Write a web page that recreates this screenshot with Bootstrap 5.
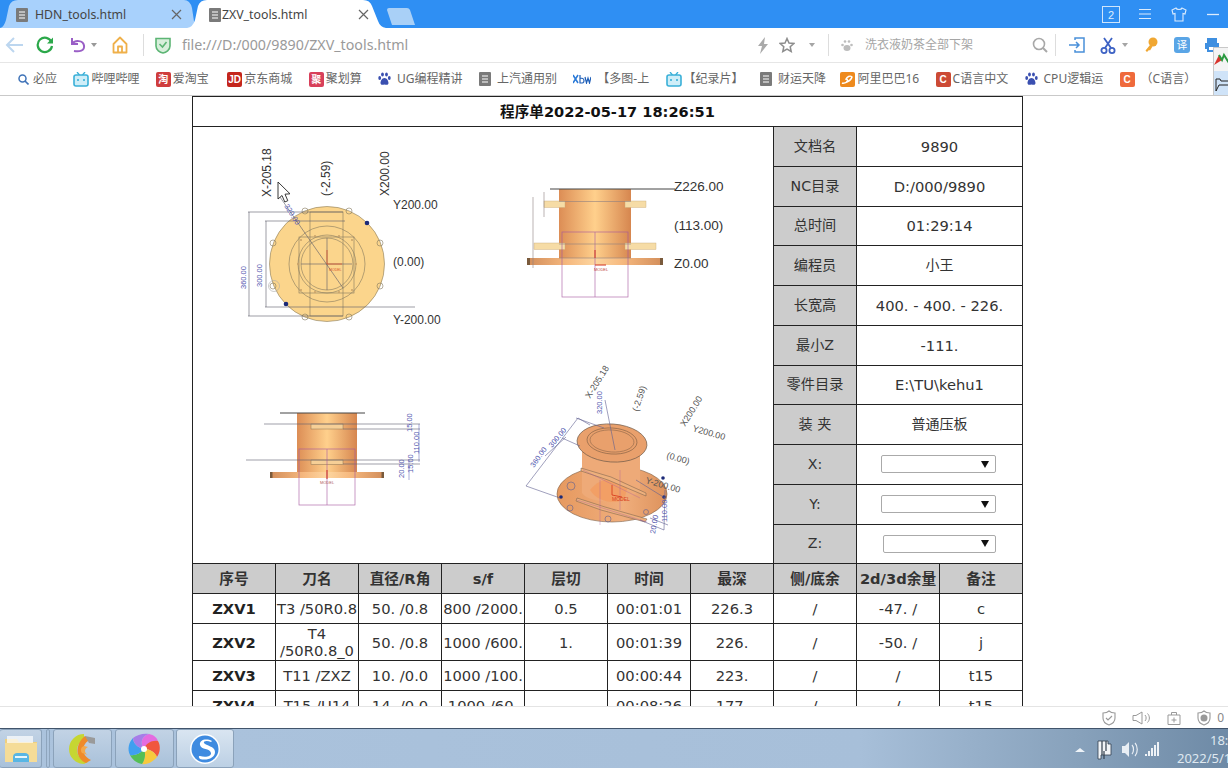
<!DOCTYPE html>
<html lang="zh">
<head>
<meta charset="utf-8">
<title>ZXV_tools.html</title>
<link href="https://cdn.jsdelivr.net/npm/bootstrap@5.3.0/dist/css/bootstrap.min.css" rel="stylesheet">
<style>
html,body{height:100%;overflow:hidden;background:#fff}
body{font-family:"Noto Sans","Noto Sans CJK SC",sans-serif;color:#333}
.shell{height:768px;width:1228px;position:relative}
.tabbar{height:28px;background:#2f8ff3;flex:none}
.tabshape{height:28px;flex:none;position:relative;font-size:12.3px;color:#444}
.tab-a{width:195px;background:#a8d1fc;clip-path:path("M0 28 Q4 27 6 20 L9 6 Q11 0 18 0 L184 0 Q190 0 192 8 L195 28 Z")}
.tab-b{width:199px;margin-left:-8px;background:#fff;clip-path:path("M0 28 Q6 27 8 20 L11 6 Q13 0 20 0 L176 0 Q183 0 185 6 L191 21 Q193 27 199 28 Z")}
.tabdoc{position:absolute;top:8px}
.tab-a .tabdoc{left:16px}.tab-b .tabdoc{left:22px}
.tablabel{position:absolute;top:5px;line-height:20px}
.tab-a .tablabel{left:35px}.tab-b .tablabel{left:35px}
.tabx{position:absolute;top:9px;width:11px;height:11px}
.tab-a .tabx{left:171px}.tab-b .tabx{left:171px}
.newtab{width:29px;height:17px;margin-top:8px;flex:none;background:#a9d0f7;clip-path:path("M1 2 Q1 0 3 0 L21 0 Q23 0 24 2 L29 17 L6 17 Z")}
.winbtns{margin-left:687px}
.adr{height:34px;background:#fff;padding-left:5px;flex:none}
.vsep{width:1px;height:22px;background:#ddd;flex:none}
.url{width:575px;margin-left:11px;color:#9a9a9a;font-size:14.25px;flex:none;white-space:nowrap}
.hint{width:167px;margin-left:12px;color:#a5a5a5;font-size:12px;flex:none;white-space:nowrap}
.m4{margin-left:4px}.m6{margin-left:6px}.m7{margin-left:7px}.m10{margin-left:10px}.m11{margin-left:11px}.m12{margin-left:12px}.m13{margin-left:13px}.m14{margin-left:14px}.m15{margin-left:15px}.m16{margin-left:16px}.m18{margin-left:18px}.m19{margin-left:19px}.m20{margin-left:20px}
.adr svg{flex:none}
.bmarks{height:34px;background:#fff;border-top:1px solid #e6e6e6;border-bottom:1px solid #c9c9c9;padding-left:18px;gap:16.4px;font-size:12px;color:#666;flex:none;white-space:nowrap}
.bmk{gap:2px}
.bmk-lead{gap:4px}
.bmk-tight{margin-left:-2px}
.bmk-push{margin-left:2px}
.tile{width:15px;height:15px;border-radius:2px;color:#fff;font-size:10px;line-height:15px;text-align:center;font-weight:700;flex:none;font-family:"Liberation Sans","Noto Sans CJK SC",sans-serif}
.tile-red{background:#cf3d3d}.tile-jd{background:#c4261d}.tile-pink{background:#d8405a}.tile-c{background:#cc4a35}.tile-o{background:#ef6a3c}.tile-ali{background:#ee8a1d}
.floatbox{position:absolute;left:1213px;top:47px;width:15px;height:49px;background:#f4f4f4;border:1px solid #c8c8c8;border-right:0;overflow:hidden}
.floatlow{position:absolute;left:0;top:23px;width:15px;height:26px;background:#cfe3f8}
.viewport{height:610px;overflow:hidden;background:#fff;flex:none;padding-right:13px}
.sheet.table{width:831px;table-layout:fixed;margin:0 auto;font-family:"DejaVu Sans","Noto Sans CJK SC",sans-serif;font-size:14.7px;--bs-table-color:#333;--bs-table-border-color:#222;border-color:#222}
.sheet.table>:not(caption)>*>*{padding:0;vertical-align:middle;text-align:center;line-height:17px;white-space:nowrap}
.sheet.table>tbody>tr>.drawcell{padding:0;vertical-align:top;text-align:left}
.sheet.table .keycell{--bs-table-bg:#ccc;font-size:14.2px}
.sheet.table .headcell{--bs-table-bg:#ccc;font-weight:700}
.sheet.table .hancell{font-size:14px}
.rowtitle{height:30px}.rowside{height:39.75px}.rowhead{height:30px}.rowdata{height:30px}.rowtall{height:37px}
.sheet.table .titlecell{font-weight:700;color:#111;font-size:14.6px}
.strong-id{font-weight:700;color:#222}
.drawcell svg{display:block}
.drawcell text{font-family:"Liberation Sans",sans-serif}
.lab{font-size:12px;fill:#333}
.labbig{font-size:13.5px;fill:#333}
.dim{font-size:7.5px;fill:#5358b0}
.iso{font-size:9px;fill:#555}
.pick.form-select{width:115px;height:18px;min-height:0;padding:0;margin:0 0 0 24px;border:1px solid #aaa;border-radius:2px;background-image:url("data:image/svg+xml,%3Csvg xmlns='http://www.w3.org/2000/svg' width='9' height='8'%3E%3Cpath d='M0 0h9L4.500 8z' fill='%23111'/%3E%3C/svg%3E");background-size:8px 7px;background-position:right 6px center;font-size:12px}
.pick-z.form-select{width:113px;margin-left:26px}
.statusbar{height:22px;border-top:1px solid #e4e4e4;background:#fff;flex:none;padding-right:4px;font-size:12px;color:#888}
.taskbar{height:40px;border-top:1px solid #41546b;background:linear-gradient(90deg,#abc3dd 0,#a7bfd9 70%,#87a1bb 88%,#6e8aa6 100%);flex:none;overflow:hidden;position:relative}
.taskbtn{height:39px;width:59px;border:1px solid #8ba2ba;border-radius:3px;background:linear-gradient(180deg,#c2d3e5,#a9c1da);flex:none}
.taskbtn-on{background:linear-gradient(180deg,#d9e5f1,#bcd0e4);width:58px}
.taskbtn-first{width:42px;border-left:0}
.taskgap{margin-left:2.5px}
.grip{width:4px;height:39px;margin:0 3px 0 4px;border:1px solid #8ea5bd;border-radius:2px;flex:none}
.tray{position:absolute;left:1075px;top:0;width:153px;height:39px}
.clock{position:absolute;color:#dfe8f0;font-size:13px;white-space:nowrap;line-height:16px}
.clock-a{left:135px;top:3px}.clock-b{left:102px;top:21px}
</style>
</head>
<body>
<div class="shell d-flex flex-column">

<div class="tabbar d-flex">
  <div class="tabshape tab-a">
    <svg class="tabdoc" width="12" height="14" viewBox="0 0 12 14"><rect width="12" height="14" rx="1" fill="#7a7a7a"/><path d="M3 4h6M3 7h6M3 10h6" stroke="#fff" stroke-width="1.200"/></svg>
    <span class="tablabel">HDN_tools.html</span>
    <svg class="tabx" viewBox="0 0 11 11"><path d="M1 1l9 9M10 1l-9 9" stroke="#666" stroke-width="1.200"/></svg>
  </div>
  <div class="tabshape tab-b">
    <svg class="tabdoc" width="12" height="14" viewBox="0 0 12 14"><rect width="12" height="14" rx="1" fill="#7a7a7a"/><path d="M3 4h6M3 7h6M3 10h6" stroke="#fff" stroke-width="1.200"/></svg>
    <span class="tablabel">ZXV_tools.html</span>
    <svg class="tabx" viewBox="0 0 11 11"><path d="M1 1l9 9M10 1l-9 9" stroke="#666" stroke-width="1.200"/></svg>
  </div>
  <div class="newtab"></div>
  <div class="winbtns d-flex align-items-center">
    <svg width="18" height="17" viewBox="0 0 18 17"><rect x=".5" y=".5" width="17" height="16" fill="none" stroke="#cfe5fb"/><text x="9" y="13" font-size="11" text-anchor="middle" fill="#dcecfd" font-family="Liberation Sans">2</text></svg>
    <svg class="m18" width="14" height="12" viewBox="0 0 14 12"><path d="M1 1.500h12M1 6h12M1 10.500h12" stroke="#dcecfd" stroke-width="1.200"/></svg>
    <svg class="m19" width="16" height="15" viewBox="0 0 16 15"><path d="M5 1L1 3l1 4 2-.5V14h8V6.500l2 .5 1-4-4-2c-.5 2-5.500 2-6 0z" fill="none" stroke="#dcecfd" stroke-width="1.100"/></svg>
    <svg class="m20" width="12" height="3" viewBox="0 0 12 3"><path d="M0 1.500h12" stroke="#dcecfd" stroke-width="1.300"/></svg>
  </div>
</div>

<div class="adr d-flex align-items-center">
  <svg width="20" height="18" viewBox="0 0 20 18"><path d="M9 2L2 9l7 7M2 9h16" fill="none" stroke="#bcd6ef" stroke-width="2"/></svg>
  <svg class="m11" width="18" height="18" viewBox="0 0 18 18"><path d="M15.500 6A7.200 7.200 0 1 0 16 10" fill="none" stroke="#2ba84a" stroke-width="2.200"/><path d="M17 1.500v6h-6z" fill="#2ba84a"/></svg>
  <svg class="m15" width="18" height="18" viewBox="0 0 18 18"><path d="M3 2v6h6" fill="none" stroke="#9a5fc6" stroke-width="2"/><path d="M3.500 7.500C6 4 14 4 15 9.500S10 16 5 15" fill="none" stroke="#9a5fc6" stroke-width="2"/></svg>
  <svg class="m4" width="6" height="4" viewBox="0 0 6 4"><path d="M0 0h6L3 4z" fill="#999"/></svg>
  <svg class="m14" width="18" height="18" viewBox="0 0 18 18"><path d="M9 1.500L2.500 8v8.500h13V8zM7 16.500v-6h4v6" fill="none" stroke="#efb04a" stroke-width="1.800" stroke-linejoin="round"/></svg>
  <div class="vsep m14"></div>
  <svg class="m11" width="16" height="18" viewBox="0 0 16 18"><path d="M1 2.500h14V10c0 4-4 6.500-7 7-3-.5-7-3-7-7z" fill="#d8efdc" stroke="#5cb574" stroke-width="1.600"/><path d="M4.500 8l3 3 4-5" fill="none" stroke="#5cb574" stroke-width="1.600"/></svg>
  <div class="url">file:///D:/000/9890/ZXV_tools.html</div>
  <svg width="12" height="17" viewBox="0 0 12 17"><path d="M8 0L1 9h4l-2 8 8-10H7z" fill="#a9a9a9"/></svg>
  <svg class="m10" width="16" height="16" viewBox="0 0 16 16"><path d="M8 1.500l2 4.500 4.800.5-3.600 3.200 1 4.800L8 12l-4.200 2.500 1-4.800L1.200 6.500 6 6z" fill="none" stroke="#8d8d8d" stroke-width="1.500"/></svg>
  <svg class="m14" width="6" height="4" viewBox="0 0 6 4"><path d="M0 0h6L3 4z" fill="#a5a5a5"/></svg>
  <div class="vsep m13"></div>
  <svg class="m12" width="12" height="13" viewBox="0 0 12 13"><g fill="#bdbdbd"><ellipse cx="6" cy="9" rx="3.500" ry="3"/><circle cx="1.500" cy="6" r="1.300"/><circle cx="10.500" cy="6" r="1.300"/><circle cx="4" cy="2.500" r="1.300"/><circle cx="8" cy="2.500" r="1.300"/></g></svg>
  <div class="hint">洗衣液奶茶全部下架</div>
  <svg width="16" height="16" viewBox="0 0 16 16"><circle cx="7" cy="7" r="5.500" fill="none" stroke="#a8a8a8" stroke-width="1.600"/><path d="M11 11l4 4" stroke="#a8a8a8" stroke-width="2"/></svg>
  <div class="vsep m7"></div>
  <svg class="m13" width="16" height="16" viewBox="0 0 16 16"><path d="M6 3V1h9v14H6v-2" fill="none" stroke="#4a90d9" stroke-width="1.500"/><path d="M0 8h9M7 5l3 3-3 3" fill="none" stroke="#4a90d9" stroke-width="1.500"/></svg>
  <svg class="m15" width="16" height="17" viewBox="0 0 16 17"><path d="M4 1l7 10M12 1L5 11" stroke="#3d62c4" stroke-width="1.800"/><circle cx="4" cy="13.500" r="2.600" fill="none" stroke="#3d62c4" stroke-width="1.800"/><circle cx="12" cy="13.500" r="2.600" fill="none" stroke="#3d62c4" stroke-width="1.800"/></svg>
  <svg class="m6" width="6" height="4" viewBox="0 0 6 4"><path d="M0 0h6L3 4z" fill="#a5a5a5"/></svg>
  <svg class="m16" width="14" height="16" viewBox="0 0 14 16"><circle cx="9" cy="5" r="4.500" fill="#f0a732"/><path d="M6 8L1.500 13.500 3 15l2-2 1 .5 2.500-4z" fill="#f0a732"/></svg>
  <svg class="m16" width="16" height="16" viewBox="0 0 16 16"><rect width="16" height="16" rx="3" fill="#5aa5e6"/><text x="8" y="12" font-size="10.500" text-anchor="middle" fill="#fff" font-family="Noto Sans CJK SC">译</text></svg>
  <svg class="m14" width="16" height="16" viewBox="0 0 16 16"><path d="M3 1h10v5H3zM1 6h14v6h-2v3H3v-3H1z" fill="#3f8fe0"/><rect x="5" y="10" width="6" height="3" fill="#fff"/></svg>
</div>

<div class="bmarks d-flex align-items-center">
  <div class="bmk bmk-lead d-flex align-items-center"><svg width="11" height="11" viewBox="0 0 11 11"><circle cx="4.500" cy="4.500" r="3.500" fill="none" stroke="#3f73b8" stroke-width="1.500"/><path d="M7 7l3.500 3.500" stroke="#3f73b8" stroke-width="1.600"/></svg>必应</div>
  <div class="bmk d-flex align-items-center"><svg width="16" height="15" viewBox="0 0 16 15"><path d="M4 0l2.500 3M12 0L9.500 3" stroke="#3ab0d8" stroke-width="1.300"/><rect x="1" y="3" width="14" height="11" rx="2" fill="#cfeef8" stroke="#3ab0d8" stroke-width="1.600"/><path d="M5 7v2M11 7v2" stroke="#3ab0d8" stroke-width="1.600"/></svg>哔哩哔哩</div>
  <div class="bmk d-flex align-items-center"><span class="tile tile-red">淘</span>爱淘宝</div>
  <div class="bmk bmk-push d-flex align-items-center"><span class="tile tile-jd">JD</span>京东商城</div>
  <div class="bmk d-flex align-items-center"><span class="tile tile-pink">聚</span>聚划算</div>
  <div class="bmk d-flex align-items-center"><svg class="me-1" width="13" height="14" viewBox="0 0 13 14"><g fill="#3a4fb0"><path d="M6.500 6c2.500 0 4 3 4 5s-2 2-4 1.500c-2 .5-4 .5-4-1.500s1.500-5 4-5z"/><ellipse cx="1.700" cy="6" rx="1.400" ry="1.900"/><ellipse cx="11.300" cy="6" rx="1.400" ry="1.900"/><ellipse cx="4.500" cy="2.500" rx="1.400" ry="2"/><ellipse cx="8.500" cy="2.500" rx="1.400" ry="2"/></g></svg>UG编程精讲</div>
  <div class="bmk d-flex align-items-center"><svg class="me-1" width="12" height="14" viewBox="0 0 12 14"><rect width="12" height="14" rx="1" fill="#7a7a7a"/><path d="M3 4h6M3 7h6M3 10h6" stroke="#fff" stroke-width="1.200"/></svg>上汽通用别</div>
  <div class="bmk d-flex align-items-center"><svg class="me-1" width="18" height="10" viewBox="0 0 18 10"><path d="M0 1l5 8M5 1L0 9" stroke="#2a7ad8" stroke-width="1.500"/><path d="M7 1v8c3 0 4 0 4-2.500S7 4 7 4M12 3l1.500 6 1.500-5 1.500 5L18 3" fill="none" stroke="#1f5fb8" stroke-width="1.200"/></svg>【多图-上</div>
  <div class="bmk d-flex align-items-center"><svg width="16" height="15" viewBox="0 0 16 15"><path d="M4 0l2.500 3M12 0L9.500 3" stroke="#3ab0d8" stroke-width="1.300"/><rect x="1" y="3" width="14" height="11" rx="2" fill="#cfeef8" stroke="#3ab0d8" stroke-width="1.600"/><path d="M5 7v2M11 7v2" stroke="#3ab0d8" stroke-width="1.600"/></svg>【纪录片】</div>
  <div class="bmk d-flex align-items-center"><svg class="me-1" width="12" height="14" viewBox="0 0 12 14"><rect width="12" height="14" rx="1" fill="#7a7a7a"/><path d="M3 4h6M3 7h6M3 10h6" stroke="#fff" stroke-width="1.200"/></svg>财运天降</div>
  <div class="bmk bmk-tight d-flex align-items-center"><span class="tile tile-ali"><svg width="15" height="15" viewBox="0 0 15 15"><path d="M2 11c2 1 9-2 10-6-2-2-5 0-6 2 2 0 2 2 0 3" fill="none" stroke="#fff" stroke-width="1.400"/></svg></span>阿里巴巴16</div>
  <div class="bmk d-flex align-items-center"><span class="tile tile-c">C</span>C语言中文</div>
  <div class="bmk d-flex align-items-center"><svg class="me-1" width="13" height="14" viewBox="0 0 13 14"><g fill="#3a4fb0"><path d="M6.500 6c2.500 0 4 3 4 5s-2 2-4 1.500c-2 .5-4 .5-4-1.500s1.500-5 4-5z"/><ellipse cx="1.700" cy="6" rx="1.400" ry="1.900"/><ellipse cx="11.300" cy="6" rx="1.400" ry="1.900"/><ellipse cx="4.500" cy="2.500" rx="1.400" ry="2"/><ellipse cx="8.500" cy="2.500" rx="1.400" ry="2"/></g></svg>CPU逻辑运</div>
  <div class="bmk d-flex align-items-center"><span class="tile tile-o me-1">C</span>（C语言）</div>
</div>

<div class="viewport">
<table class="table table-bordered sheet mb-0">
  <colgroup><col><col><col><col><col><col><col><col><col><col></colgroup>
  <tbody>
    <tr class="rowtitle"><td class="titlecell" colspan="10">程序单2022-05-17 18:26:51</td></tr>
    <tr class="rowside">
      <td class="drawcell" colspan="7" rowspan="11">
<svg width="580" height="436" viewBox="193 127 580 436" role="img" aria-label="零件图">
  <defs>
    <linearGradient id="cyl" x1="0" x2="1" y1="0" y2="0"><stop offset="0" stop-color="#dc8d55"/><stop offset=".5" stop-color="#ffd08c"/><stop offset="1" stop-color="#d6864f"/></linearGradient>
    <linearGradient id="flg" x1="0" x2="1" y1="0" y2="0"><stop offset="0" stop-color="#d28d5a"/><stop offset=".3" stop-color="#f6b97f"/><stop offset=".5" stop-color="#fdd6a0"/><stop offset=".7" stop-color="#f6b97f"/><stop offset="1" stop-color="#d28d5a"/></linearGradient>
    <linearGradient id="iso" x1="0" x2="1" y1="0" y2="0"><stop offset="0" stop-color="#e6995f"/><stop offset=".6" stop-color="#f0ae7c"/><stop offset="1" stop-color="#dd925c"/></linearGradient>
  </defs>

  <!-- top view -->
  <circle cx="327" cy="264" r="57.500" fill="#fbd58c" stroke="#8a7a58" stroke-width=".6"/>
  <g fill="none" stroke="#84785e" stroke-width=".6">
    <rect x="310" y="212" width="33" height="104"/>
    <circle cx="327" cy="264" r="38"/>
    <circle cx="327" cy="264" r="29"/>
    <circle cx="327" cy="264" r="26"/>
    <rect x="299" y="237" width="55" height="56"/>
    <circle cx="305" cy="211" r="3"/><circle cx="349" cy="211" r="3"/><circle cx="273" cy="243" r="3"/><circle cx="380" cy="243" r="3"/><circle cx="273" cy="286" r="3"/><circle cx="380" cy="286" r="3"/><circle cx="305" cy="317" r="3"/><circle cx="349" cy="317" r="3"/>
    <circle cx="274" cy="286" r="5.500" stroke="#aaa"/>
  </g>
  <g fill="#c9a068"><circle cx="301" cy="240" r="1"/><circle cx="352" cy="240" r="1"/><circle cx="301" cy="290" r="1"/><circle cx="352" cy="290" r="1"/><circle cx="298" cy="264" r="1"/><circle cx="356" cy="264" r="1"/><circle cx="315" cy="236" r="1"/><circle cx="339" cy="236" r="1"/><circle cx="315" cy="292" r="1"/><circle cx="339" cy="292" r="1"/></g>
  <circle cx="367" cy="223" r="2.300" fill="#1c2a78"/><circle cx="286" cy="304" r="2.300" fill="#1c2a78"/>
  <g stroke="#5a5a68" stroke-width=".6" fill="none">
    <path d="M248 212H343M265 221H345M265 307H415M248 316H343"/>
    <path d="M249 212V316M266 221V307"/>
    <path d="M280 197L343 288"/>
    <path d="M301 264H352M327 238V290"/>
  </g>
  <path d="M327 264V250M327 264H342" stroke="#d8542c" stroke-width=".8" fill="none"/>
  <text x="329" y="271" font-size="3.500" fill="#d8542c">MODEL</text>
  <text class="dim" transform="translate(246 289) rotate(-90)">360.00</text>
  <text class="dim" transform="translate(262 287) rotate(-90)">300.00</text>
  <text class="dim" transform="translate(284 206) rotate(58)">320.00</text>
  <text class="lab" transform="translate(271 197) rotate(-90)">X-205.18</text>
  <text class="lab" transform="translate(330 196) rotate(-90)">(-2.59)</text>
  <text class="lab" transform="translate(389 196) rotate(-90)">X200.00</text>
  <text class="lab" x="393" y="209">Y200.00</text>
  <text class="lab" x="393" y="266">(0.00)</text>
  <text class="lab" x="393" y="324">Y-200.00</text>
  <path d="M278 182v17l4-3.500 2.800 6.500 3-1.300-2.800-6.500 5-.4z" fill="#fff" stroke="#222" stroke-width=".9"/>

  <!-- front view -->
  <rect x="559" y="189" width="72" height="69" fill="url(#cyl)"/>
  <rect x="527" y="258" width="136" height="7" fill="url(#flg)"/>
  <path d="M527 258h3v7h-3zM660 258h3v7h-3z" fill="#7a5a3c"/>
  <g fill="#f6dca6" stroke="#c8a878" stroke-width=".4"><rect x="544" y="201" width="21" height="6.500"/><rect x="625" y="201" width="21" height="6.500"/><rect x="534" y="243" width="31" height="6.500"/><rect x="625" y="243" width="31" height="6.500"/></g>
  <g fill="none" stroke="#a6579f" stroke-width=".7" opacity=".85"><rect x="562" y="232" width="66" height="65"/><path d="M595 232v65"/></g>
  <path d="M550 189H675" stroke="#444" stroke-width="1"/>
  <path d="M533 197V268M544 192V217M559 201.500H631M559 244H631M559 258H631" stroke="#8f7f80" stroke-width=".6"/>
  <path d="M595 258V250M595 265H606" stroke="#d03020" stroke-width="1"/>
  <text x="594" y="271" font-size="4" fill="#c04040">MODEL</text>
  <text class="labbig" x="674" y="191">Z226.00</text>
  <text class="labbig" x="674" y="230">(113.00)</text>
  <text class="labbig" x="674" y="268">Z0.00</text>

  <!-- side view -->
  <rect x="297" y="413" width="60" height="59" fill="url(#cyl)"/>
  <rect x="270" y="472" width="114" height="6" fill="url(#flg)"/>
  <path d="M270 472h2.500v6H270zM381.500 472h2.500v6h-2.500z" fill="#7a5a3c"/>
  <g fill="#f6cf96" stroke="#8a7050" stroke-width=".5"><rect x="311" y="424" width="32" height="5"/><rect x="311" y="460" width="32" height="4.500"/></g>
  <g stroke="#5f5f70" stroke-width=".6"><path d="M264 424H420M343 429H420M246 460H420M343 464H420"/></g>
  <path d="M280 413H365" stroke="#444" stroke-width="1"/>
  <g fill="none" stroke="#a6579f" stroke-width=".7" opacity=".85"><rect x="299" y="449" width="56" height="56"/><path d="M327 449v56"/></g>
  <path d="M327 470v9" stroke="#d03020" stroke-width="1"/>
  <text x="327" y="484" font-size="4" fill="#b06060" text-anchor="middle">MODEL</text>
  <path d="M419 424V462M409 460V480" stroke="#5358b0" stroke-width=".5"/>
  <text class="dim" transform="translate(412 432) rotate(-90)">15.00</text>
  <text class="dim" transform="translate(419 454) rotate(-90)">110.00</text>
  <text class="dim" transform="translate(413 473) rotate(-90)">15.00</text>
  <text class="dim" transform="translate(404 478) rotate(-90)">20.00</text>

  <!-- isometric view -->
  <ellipse cx="612" cy="494" rx="55" ry="28" fill="url(#iso)" stroke="#7a5a40" stroke-width=".6"/>
  <path d="M582 450V493C590 505 632 505 640 488V450z" fill="#eeaa78"/>
  <path d="M590 490c10-14 30-14 38-4l-4 14c-12 4-26 2-34-10z" fill="#f39c60" opacity=".8"/>
  <ellipse cx="612" cy="443" rx="35" ry="19" fill="#e9a06c" stroke="#6f5a4a" stroke-width=".7" transform="rotate(4 612 443)"/>
  <ellipse cx="612" cy="441" rx="25" ry="13" fill="none" stroke="#7a5a40" stroke-width=".6" transform="rotate(4 612 441)"/>
  <ellipse cx="612" cy="441" rx="22" ry="11" fill="none" stroke="#7a5a40" stroke-width=".5" transform="rotate(4 612 441)"/>
  <g fill="#eeb07c" stroke="#6f5a4a" stroke-width=".5">
    <path d="M581 468l30 9 35 16 0 3-38-16-27-9z"/>
    <path d="M577 498l28 9 42 12-2 3-44-12-25-9z"/>
  </g>
  <g><circle cx="561" cy="497" r="1.800" fill="#1c2a78"/><circle cx="663" cy="478" r="1.800" fill="#1c2a78"/><circle cx="664" cy="497" r="1.800" fill="#1c2a78"/></g>
  <g fill="none" stroke="#5f6090" stroke-width=".6">
    <circle cx="571" cy="486" r="4"/><circle cx="570" cy="508" r="3"/><circle cx="608" cy="519" r="3"/><circle cx="646" cy="512" r="2.500"/>
    <path d="M605 400L615 450M578 418L526 486M578 418L590 425M566 437L545 456"/>
    <path d="M576 418L604 428M562 438L580 446M526 486L560 498"/>
    <path d="M640 520L664 530M665 490L664 530M650 518L668 525M636 480L665 498"/>
  </g>
  <g stroke="#a6579f" stroke-width=".5" opacity=".7" fill="none"><path d="M583 470L640 498M600 480V525M620 470V510M577 500L647 522"/></g>
  <path d="M612 485v10l10 2" stroke="#d84020" stroke-width=".9" fill="none"/>
  <text x="612" y="501" font-size="5" fill="#d84020">MODEL</text>
  <text class="dim" transform="translate(534 468) rotate(-55)">360.00</text>
  <text class="dim" transform="translate(552 448) rotate(-50)">300.00</text>
  <text class="dim" transform="translate(602 414) rotate(-90)">320.00</text>
  <text class="dim" transform="translate(667 522) rotate(-90)">110.00</text>
  <text class="dim" transform="translate(655 534) rotate(-80)">20.00</text>
  <text class="iso" transform="translate(590 399) rotate(-58)">X-205.18</text>
  <text class="iso" transform="translate(638 412) rotate(-72)">(-2.59)</text>
  <text class="iso" transform="translate(685 427) rotate(-58)">X200.00</text>
  <text class="iso" transform="translate(692 431) rotate(16)">Y200.00</text>
  <text class="iso" transform="translate(666 458) rotate(16)">(0.00)</text>
  <text class="iso" transform="translate(645 483) rotate(16)">Y-200.00</text>
</svg>
      </td>
      <td class="keycell">文档名</td><td colspan="2">9890</td>
    </tr>
    <tr class="rowside"><td class="keycell">NC目录</td><td colspan="2">D:/000/9890</td></tr>
    <tr class="rowside"><td class="keycell">总时间</td><td colspan="2">01:29:14</td></tr>
    <tr class="rowside"><td class="keycell">编程员</td><td class="hancell" colspan="2">小王</td></tr>
    <tr class="rowside"><td class="keycell">长宽高</td><td colspan="2">400. - 400. - 226.</td></tr>
    <tr class="rowside"><td class="keycell">最小Z</td><td colspan="2">-111.</td></tr>
    <tr class="rowside"><td class="keycell">零件目录</td><td colspan="2">E:\TU\kehu1</td></tr>
    <tr class="rowside"><td class="keycell">装 夹</td><td class="hancell" colspan="2">普通压板</td></tr>
    <tr class="rowside"><td class="keycell">X:</td><td colspan="2"><select class="form-select pick" aria-label="X"><option></option></select></td></tr>
    <tr class="rowside"><td class="keycell">Y:</td><td colspan="2"><select class="form-select pick" aria-label="Y"><option></option></select></td></tr>
    <tr class="rowside"><td class="keycell">Z:</td><td colspan="2"><select class="form-select pick pick-z" aria-label="Z"><option></option></select></td></tr>
    <tr class="rowhead">
      <td class="headcell">序号</td><td class="headcell">刀名</td><td class="headcell">直径/R角</td><td class="headcell">s/f</td><td class="headcell">层切</td><td class="headcell">时间</td><td class="headcell">最深</td><td class="headcell">侧/底余</td><td class="headcell">2d/3d余量</td><td class="headcell">备注</td>
    </tr>
    <tr class="rowdata"><td class="strong-id">ZXV1</td><td>T3 /50R0.8</td><td>50. /0.8</td><td>800 /2000.</td><td>0.5</td><td>00:01:01</td><td>226.3</td><td>/</td><td>-47. /</td><td>c</td></tr>
    <tr class="rowtall"><td class="strong-id">ZXV2</td><td>T4<br>/50R0.8_0</td><td>50. /0.8</td><td>1000 /600.</td><td>1.</td><td>00:01:39</td><td>226.</td><td>/</td><td>-50. /</td><td>j</td></tr>
    <tr class="rowdata"><td class="strong-id">ZXV3</td><td>T11 /ZXZ</td><td>10. /0.0</td><td>1000 /100.</td><td></td><td>00:00:44</td><td>223.</td><td>/</td><td>/</td><td>t15</td></tr>
    <tr class="rowdata"><td class="strong-id">ZXV4</td><td>T15 /U14</td><td>14. /0.0</td><td>1000 /60.</td><td></td><td>00:08:26</td><td>177.</td><td>/</td><td>/</td><td>t15</td></tr>
  </tbody>
</table>
</div>

<div class="statusbar d-flex align-items-center justify-content-end">
  <svg width="14" height="16" viewBox="0 0 14 16"><path d="M1 3c3 0 5-1 6-2 1 1 3 2 6 2v5c0 4-3 6-6 7-3-1-6-3-6-7z" fill="none" stroke="#999" stroke-width="1.100"/><path d="M4 8l2 2 4-4" fill="none" stroke="#999" stroke-width="1.100"/></svg>
  <svg class="m16" width="19" height="14" viewBox="0 0 19 14"><path d="M1 4.500h3L10 1v12L4 9.500H1z" fill="none" stroke="#999"/><path d="M13 4c1.500 1.500 1.500 4.500 0 6M15.500 2.500c2.500 2.500 2.500 6.500 0 9" fill="none" stroke="#999"/></svg>
  <svg class="m16" width="14" height="14" viewBox="0 0 14 14"><path d="M1 4h12v9.500H1zM4.500 4V1.500h5V4M7 6.500v5M4.500 9h5" fill="none" stroke="#999"/></svg>
  <svg class="m16" width="14" height="16" viewBox="0 0 14 16"><path d="M1 3c3 0 5-1 6-2 1 1 3 2 6 2v5c0 4-3 6-6 7-3-1-6-3-6-7z" fill="none" stroke="#999" stroke-width="1.100"/><circle cx="7" cy="8" r="3.500" fill="#999"/></svg>
  <span class="m6">0</span>
</div>

<div class="taskbar d-flex align-items-start">
  <div class="taskbtn taskbtn-first d-flex align-items-center justify-content-center">
    <svg width="32" height="30" viewBox="0 0 32 30"><path d="M0 5h12l2 3h18v18H0z" fill="#efd07f"/><path d="M2 2h26v8H2z" fill="#fff" opacity=".7"/><rect y="9" width="32" height="19" fill="#f5dc98"/><path d="M8 28v-5c0-3 2-4 4-4h8c2 0 4 1 4 4v5z" fill="#58b6e4"/><rect x="10" y="22" width="12" height="2" fill="#e8f6fc"/></svg>
  </div>
  <div class="grip"></div>
  <div class="taskbtn d-flex align-items-center justify-content-center">
    <svg width="30" height="32" viewBox="0 0 30 32"><path d="M16 1A15 15 0 0 0 16 31L20 29C8 28 5 10 16 8z" fill="#c6d632"/><path d="M22 7C14 10 12 22 23 27L18 30C8 26 6 12 17 3z" fill="#ef8a2a"/><path d="M17 3l10 2v6l-6-1z" fill="#9a9a9a"/><path d="M20 14c-4 2-4 6 0 8l-6-2c-2-3-1-6 2-7z" fill="#f4a84a"/></svg>
  </div>
  <div class="taskbtn taskgap d-flex align-items-center justify-content-center">
    <svg width="34" height="34" viewBox="0 0 34 34"><path d="M17 17C13 12 14 4 22 2c5 1 8 4 9 7-4-1-10 2-14 8z" fill="#e46ce0"/><path d="M17 17c2-6 8-9 14-8 3 5 2 12-1 16-2-5-7-8-13-8z" fill="#f0563f"/><path d="M17 17c6 0 11 3 13 8-4 5-10 8-15 7 3-4 4-10 2-15z" fill="#f7c93e"/><path d="M17 17c2 5 1 11-2 15-6-1-10-5-12-9 4 1 10-1 14-6z" fill="#55bf55"/><path d="M17 17c-4 5-10 7-14 6-3-6-1-13 3-17 0 5 5 10 11 11z" fill="#3f9ff0"/><path d="M17 17C11 16 6 11 6 6c4-3 10-5 16-4-8 2-9 10-5 15z" fill="#a77de8"/><circle cx="17" cy="17" r="3" fill="#fff"/></svg>
  </div>
  <div class="taskbtn taskbtn-on taskgap d-flex align-items-center justify-content-center">
    <svg width="32" height="32" viewBox="0 0 32 32"><circle cx="16" cy="16" r="15" fill="#fff"/><circle cx="16" cy="16" r="13.500" fill="#3f8be0"/><path d="M23 8c-6-3-13-1-12 4 1 5 10 3 11 8 .5 3-5 5-11 3-2 0-1 2 0 3 7 2 15-1 15-7 0-6-9-6-11-9-1-2 3-3 7-1z" fill="#fff"/></svg>
  </div>
  <div class="tray">
    <svg class="d-block" width="90" height="39" viewBox="0 0 90 39">
      <path d="M0 23l5-4 5 4z" fill="#eef3f8"/>
      <path d="M23 12h10v3h3v11H26v4h-3z" fill="#f2f5f8" stroke="#33404e" stroke-width=".8"/>
      <path d="M27 12v14M31 12v10M29 22v8" stroke="#33404e" stroke-width="1.200"/>
      <path d="M47 17h3l4-4v15l-4-4h-3z" fill="#e8eef4"/><path d="M57 16c2 2 2 7 0 9M60 14c3 3 3 10 0 13" fill="none" stroke="#e8eef4" stroke-width="1.200"/>
      <path d="M70 25h2v2h-2zM73 22h2v5h-2zM76 19h2v8h-2zM79 16h2v11h-2zM82 13h2v14h-2z" fill="#eef2f6"/>
    </svg>
    <span class="clock clock-a">18:</span>
    <span class="clock clock-b">2022/5/1</span>
  </div>
</div>

<div class="floatbox">
  <svg class="d-block" width="15" height="20" viewBox="0 0 15 20"><path d="M0 17L5 7l3 5z" fill="#d8342c"/><path d="M5 7L8 12l2-5 5 8" fill="none" stroke="#2a9a40" stroke-width="2"/></svg>
  <div class="floatlow"><svg class="d-block" width="15" height="26" viewBox="0 0 15 26"><path d="M2 20V8h4l1 2h8M2 20l3-6h10" fill="none" stroke="#222" stroke-width="1"/></svg></div>
</div>

</div>
<script src="https://cdn.jsdelivr.net/npm/bootstrap@5.3.0/dist/js/bootstrap.bundle.min.js"></script>
</body>
</html>
